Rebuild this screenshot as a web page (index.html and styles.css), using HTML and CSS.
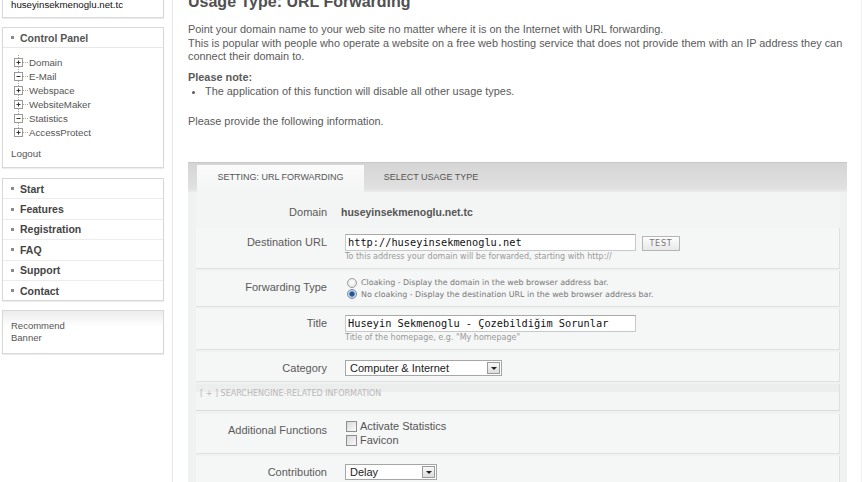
FILE: index.html
```html
<!DOCTYPE html>
<html>
<head>
<meta charset="utf-8">
<title>Usage Type: URL Forwarding</title>
<link rel="stylesheet" href="styles.css">
</head>
<body>
<div class="page">
  <aside class="sidebar">
    <div class="box domain-box">huseyinsekmenoglu.net.tc</div>

    <div class="box cp">
      <div class="cp-head"><span class="sq"></span>Control Panel</div>
      <ul class="tree">
        <li><svg width="15" height="14" viewBox="0 0 15 14"><path d="M4.5 0V14M9 7.5H14" stroke="#a8a8a8" stroke-dasharray="1 1" fill="none"/><rect x="0.5" y="3.5" width="8" height="8" fill="#fff" stroke="#9a9a9a"/><path d="M2.5 7.5H6.5M4.5 5.5V9.5" stroke="#333"/></svg>Domain</li>
        <li><svg width="15" height="14" viewBox="0 0 15 14"><path d="M4.5 0V14M9 7.5H14" stroke="#a8a8a8" stroke-dasharray="1 1" fill="none"/><rect x="0.5" y="3.5" width="8" height="8" fill="#fff" stroke="#9a9a9a"/><path d="M2.5 7.5H6.5" stroke="#333"/></svg>E-Mail</li>
        <li><svg width="15" height="14" viewBox="0 0 15 14"><path d="M4.5 0V14M9 7.5H14" stroke="#a8a8a8" stroke-dasharray="1 1" fill="none"/><rect x="0.5" y="3.5" width="8" height="8" fill="#fff" stroke="#9a9a9a"/><path d="M2.5 7.5H6.5M4.5 5.5V9.5" stroke="#333"/></svg>Webspace</li>
        <li><svg width="15" height="14" viewBox="0 0 15 14"><path d="M4.5 0V14M9 7.5H14" stroke="#a8a8a8" stroke-dasharray="1 1" fill="none"/><rect x="0.5" y="3.5" width="8" height="8" fill="#fff" stroke="#9a9a9a"/><path d="M2.5 7.5H6.5M4.5 5.5V9.5" stroke="#333"/></svg>WebsiteMaker</li>
        <li><svg width="15" height="14" viewBox="0 0 15 14"><path d="M4.5 0V14M9 7.5H14" stroke="#a8a8a8" stroke-dasharray="1 1" fill="none"/><rect x="0.5" y="3.5" width="8" height="8" fill="#fff" stroke="#9a9a9a"/><path d="M2.5 7.5H6.5" stroke="#333"/></svg>Statistics</li>
        <li><svg width="15" height="14" viewBox="0 0 15 14"><path d="M4.5 0V7M9 7.5H14" stroke="#a8a8a8" stroke-dasharray="1 1" fill="none"/><rect x="0.5" y="3.5" width="8" height="8" fill="#fff" stroke="#9a9a9a"/><path d="M2.5 7.5H6.5M4.5 5.5V9.5" stroke="#333"/></svg>AccessProtect</li>
      </ul>
      <div class="logout">Logout</div>
    </div>

    <ul class="box nav">
      <li><span class="sq"></span>Start</li>
      <li><span class="sq"></span>Features</li>
      <li><span class="sq"></span>Registration</li>
      <li><span class="sq"></span>FAQ</li>
      <li><span class="sq"></span>Support</li>
      <li><span class="sq"></span>Contact</li>
    </ul>

    <div class="box rec">Recommend<br>Banner</div>
  </aside>

  <main class="main">
    <h1 class="title">Usage Type: URL Forwarding</h1>
    <p class="intro">Point your domain name to your web site no matter where it is on the Internet with URL forwarding.<br>This is popular with people who operate a website on a free web hosting service that does not provide them with an IP address they can<br>connect their domain to.</p>
    <p class="note-head">Please note:</p>
    <ul class="note"><li>The application of this function will disable all other usage types.</li></ul>
    <p class="provide">Please provide the following information.</p>

    <div class="panel">
      <div class="tabs">
        <div class="tab active">SETTING: URL FORWARDING</div>
        <div class="tab second">SELECT USAGE TYPE</div>
      </div>
      <div class="pbody">
        <div class="row plain">
          <div class="lbl">Domain</div>
          <div class="val domain-val">huseyinsekmenoglu.net.tc</div>
        </div>

        <div class="row">
          <div class="lbl">Destination URL</div>
          <div class="val">
            <div class="inline">
              <div class="inp">http://huseyinsekmenoglu.net</div>
              <div class="btn">TEST</div>
            </div>
            <div class="hint">To this address your domain will be forwarded, starting with http://</div>
          </div>
        </div>

        <div class="row r-fwd">
          <div class="lbl">Forwarding Type</div>
          <div class="val">
            <div class="opt"><span class="radio"></span>Cloaking - Display the domain in the web browser address bar.</div>
            <div class="opt"><span class="radio on"></span>No cloaking - Display the destination URL in the web browser address bar.</div>
          </div>
        </div>

        <div class="row">
          <div class="lbl">Title</div>
          <div class="val">
            <div class="inp">Huseyin Sekmenoglu - Çozebildiğim Sorunlar</div>
            <div class="hint">Title of the homepage, e.g. "My homepage"</div>
          </div>
        </div>

        <div class="row r-sel">
          <div class="lbl">Category</div>
          <div class="val">
            <div class="sel w-cat"><span>Computer &amp; Internet</span><span class="arrow"></span></div>
          </div>
        </div>

        <div class="seh">[ + ] SEARCHENGINE-RELATED INFORMATION</div>

        <div class="row r-chk">
          <div class="lbl">Additional Functions</div>
          <div class="val">
            <div class="chk"><span class="box-chk"></span>Activate Statistics</div>
            <div class="chk"><span class="box-chk"></span>Favicon</div>
          </div>
        </div>

        <div class="row r-sel">
          <div class="lbl">Contribution</div>
          <div class="val">
            <div class="sel w-con"><span>Delay</span><span class="arrow"></span></div>
          </div>
        </div>
      </div>
    </div>
  </main>
</div>
</body>
</html>
```

FILE: styles.css
```css
* { box-sizing: border-box; }
html, body { margin: 0; padding: 0; background: #fff; }
body { font-family: "Liberation Sans", Arial, sans-serif; color: #555; }

.page { display: flex; height: 482px; overflow: hidden; }

/* ---------- sidebar ---------- */
.sidebar {
  flex: none;
  width: 173px;
  border-right: 1px solid #e6e6e6;
  padding-left: 2px;
}
.box {
  width: 162px;
  border: 1px solid #d8d8d8;
  background: #fff;
  box-shadow: 0 1px 1px rgba(0,0,0,.07);
}
.domain-box {
  margin-top: -6px;
  height: 24px;
  padding: 4px 0 0 8px;
  font-size: 9.7px;
  line-height: 12px;
  color: #111;
}
.cp { margin-top: 9px; padding-bottom: 6px; }
.cp-head {
  height: 20px;
  border-bottom: 1px solid #e8e8e8;
  padding-left: 8px;
  display: flex;
  align-items: center;
  font-weight: bold;
  font-size: 10.5px;
  color: #555;
}
.sq { flex: none; width: 3px; height: 3px; background: #8a8a8a; margin-right: 6px; }
.tree { list-style: none; margin: 7px 0 0; padding: 0 0 0 11px; }
.tree li {
  display: flex;
  align-items: center;
  height: 14px;
  font-size: 9.7px;
  color: #555;
}
.tree svg { display: block; flex: none; }
.logout { margin-top: 8px; padding-left: 8px; font-size: 9.8px; line-height: 14px; color: #555; }

.nav { margin: 10px 0 0; padding: 0; list-style: none; }
.nav li {
  height: 20.4px;
  border-bottom: 1px solid #ececec;
  display: flex;
  align-items: center;
  padding-left: 8px;
  font-weight: bold;
  font-size: 10.5px;
  color: #444;
}
.nav li:last-child { border-bottom: 0; height: 19.4px; }

.rec {
  margin-top: 8.6px;
  padding: 9px 0 9px 8px;
  font-size: 9.5px;
  line-height: 12px;
  color: #555;
  background: linear-gradient(#ececec, #fff 16px);
}

/* ---------- main ---------- */
.main {
  flex: 1;
  min-width: 0;
  padding: 0 14px 0 15px;
  border-right: 1px solid #efefef;
}
.title {
  margin: -7px 0 0;
  font-size: 16px;
  line-height: 18px;
  font-weight: bold;
  color: #505050;
  white-space: nowrap;
}
.intro, .note-head, .note, .provide {
  font-size: 10.9px;
  line-height: 13.5px;
  color: #5a5a5a;
  white-space: nowrap;
}
.intro { margin: 12.25px 0 0; }
.note-head { margin: 7.5px 0 0; font-weight: bold; }
.note { margin: 0; padding-left: 17px; }
.provide { margin: 16.5px 0 0; }

.panel { margin-top: 33.75px; }
.tabs {
  height: 30px;
  border-top: 1px solid #c8c8c8;
  background: linear-gradient(#d5d5d5, #e0e0e0 85%, #eaeaea);
  display: flex;
  align-items: flex-end;
  padding-left: 9px;
}
.tab {
  height: 27px;
  display: flex;
  align-items: center;
  justify-content: center;
  padding-bottom: 4px;
  font-size: 9px;
  color: #555;
  white-space: nowrap;
}
.tab.active { width: 167px; background: linear-gradient(#fbfbfb, #f3f4f4); }
.tab.second { width: 134px; }

.pbody { background: #f0f1f1; padding: 0 7px 10px 8px; }
.row {
  display: grid;
  grid-template-columns: 131px 1fr;
  column-gap: 18px;
  background: #f5f6f6;
  border-right: 1px solid #dfe0e0;
  border-bottom: 1px solid #dfe0e0;
  margin-bottom: 2px;
  padding: 6px 0;
}
.lbl {
  text-align: right;
  font-size: 11px;
  line-height: 17px;
  color: #5a5a5a;
  white-space: nowrap;
}
.val { min-width: 0; }

.row.plain {
  background: #f3f4f4;
  border: 0;
  margin-bottom: 0;
  padding: 14px 0 9px;
}
.row.plain .lbl { line-height: 13px; }
.domain-val {
  margin-left: -4px;
  font-weight: bold;
  font-size: 10.5px;
  line-height: 13px;
  color: #555;
}

.inline { display: flex; align-items: flex-end; gap: 6px; }
.inp {
  width: 291px;
  height: 17px;
  border: 1px solid #c8c8c8;
  border-top-color: #a9a9a9;
  background: #fff;
  padding: 0 2px;
  font-family: "DejaVu Sans Mono", "Liberation Mono", monospace;
  font-size: 10.3px;
  line-height: 15px;
  color: #111;
  white-space: nowrap;
  overflow: hidden;
}
.btn {
  width: 38px;
  height: 15px;
  border: 1px solid #b5b5b5;
  background: linear-gradient(#fdfdfd, #e8e8e8);
  display: flex;
  align-items: center;
  justify-content: center;
  font-family: "DejaVu Sans", sans-serif;
  font-size: 8px;
  letter-spacing: .8px;
  color: #777;
}
.hint {
  margin-top: 1px;
  font-family: "DejaVu Sans", sans-serif;
  font-size: 8px;
  line-height: 10px;
  color: #9a9a9a;
  white-space: nowrap;
}

.r-fwd .lbl { margin-top: 3px; line-height: 14px; }
.opt {
  display: flex;
  align-items: center;
  height: 11.5px;
  font-family: "DejaVu Sans", sans-serif;
  font-size: 7.9px;
  color: #777;
  white-space: nowrap;
}
.radio {
  flex: none;
  width: 10px;
  height: 10px;
  border-radius: 50%;
  border: 1px solid #9c9c9c;
  background: radial-gradient(circle at 50% 40%, #fff, #dedede);
  margin: 0 4px 0 2px;
}
.radio.on {
  border-color: #6f8aa8;
  background: radial-gradient(circle, #1f4f86 0, #2c5f98 2.3px, #b9cbe0 3px, #e9eff6 4.5px);
}

.r-sel { padding: 8px 0 5px; }
.r-sel .lbl { line-height: 16px; }
.sel {
  display: flex;
  align-items: center;
  height: 16px;
  border: 1px solid #a6a6a6;
  background: #fff;
  padding-left: 4px;
  font-size: 11px;
  color: #222;
  white-space: nowrap;
}
.w-cat { width: 157px; }
.w-con { width: 92px; }
.arrow {
  margin-left: auto;
  margin-right: 1px;
  flex: none;
  width: 13px;
  height: 12px;
  border: 1px solid #9a9a9a;
  background: linear-gradient(#f8f8f8, #dcdcdc);
  display: flex;
  align-items: center;
  justify-content: center;
}
.arrow::after {
  content: "";
  border-left: 3px solid transparent;
  border-right: 3px solid transparent;
  border-top: 3px solid #222;
}

.seh {
  background: linear-gradient(#eceded 0, #eceded 8px, #f4f5f5 8px);
  border-right: 1px solid #dfe0e0;
  border-bottom: 1px solid #dadbdb;
  margin-bottom: 3px;
  padding: 5px 0 11px 4px;
  font-family: "DejaVu Sans", sans-serif;
  font-size: 8px;
  line-height: 10px;
  color: #b8b8b8;
  white-space: nowrap;
}

.r-chk { padding: 5px 0 6px; }
.r-chk .lbl { margin-top: 4px; line-height: 14px; }
.chk {
  display: flex;
  align-items: center;
  height: 14px;
  font-size: 11px;
  color: #555;
  white-space: nowrap;
}
.box-chk {
  flex: none;
  width: 11px;
  height: 11px;
  border: 1px solid #8e8e8e;
  background: linear-gradient(135deg, #d8d8d8, #fafafa);
  margin: 0 3px 0 1px;
}
```
